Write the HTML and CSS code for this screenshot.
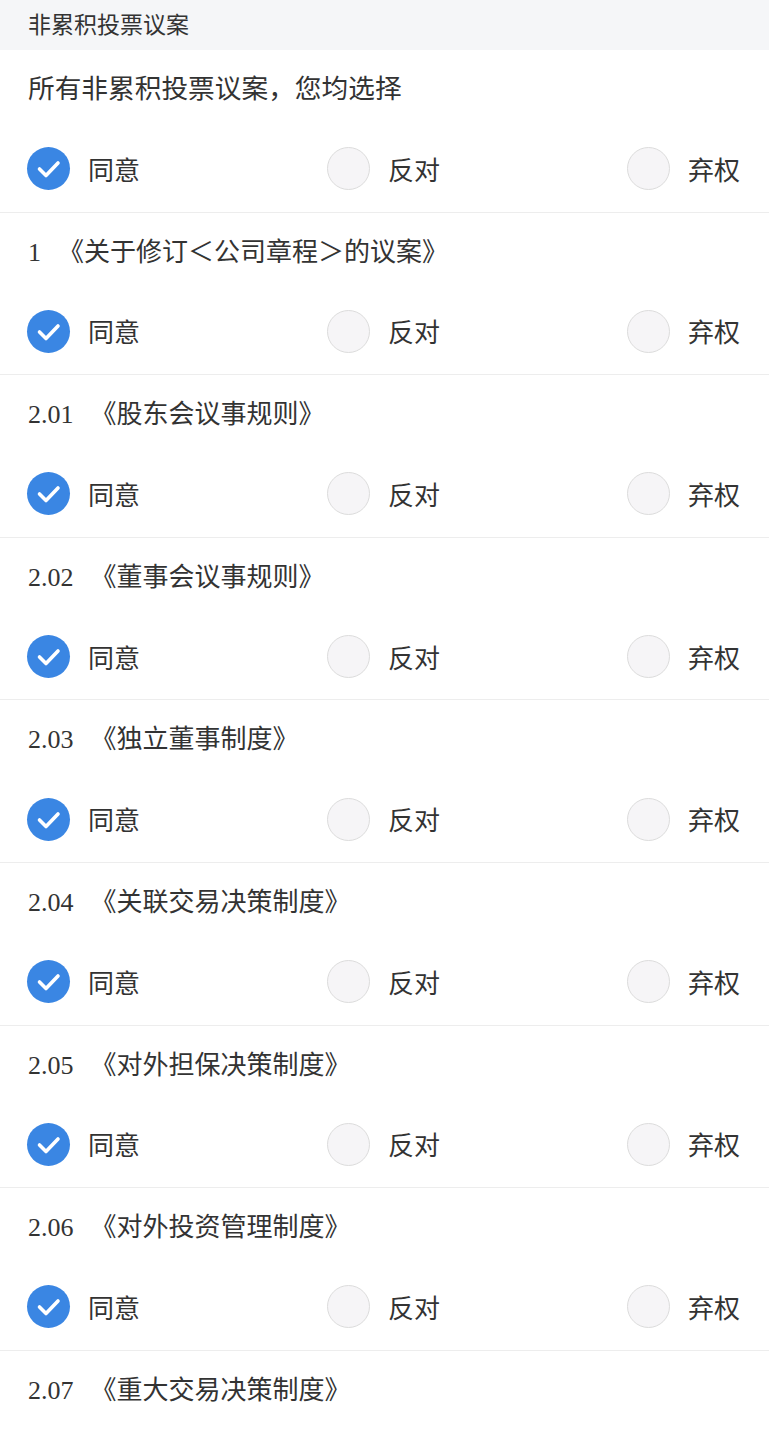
FILE: index.html
```html
<!DOCTYPE html>
<html lang="zh-CN">
<head>
<meta charset="utf-8">
<title>非累积投票议案</title>
<link rel="stylesheet" href="styles.css">
</head>
<body>
<div class="header">非累积投票议案</div>

<div class="section">
  <div class="title all">所有非累积投票议案，您均选择</div>
  <div class="options">
    <div class="opt"><span class="check"><svg viewBox="0 0 43 43" width="43" height="43"><path d="M12.5 22 L19 28.5 L31 16" fill="none" stroke="#fff" stroke-width="3.6" stroke-linecap="round" stroke-linejoin="round"/></svg></span><span class="lbl">同意</span></div>
    <div class="opt"><span class="radio"></span><span class="lbl">反对</span></div>
    <div class="opt"><span class="radio"></span><span class="lbl">弃权</span></div>
  </div>
</div>

<div class="section">
  <div class="title"><span class="num">1</span>《关于修订＜公司章程＞的议案》</div>
  <div class="options">
    <div class="opt"><span class="check"><svg viewBox="0 0 43 43" width="43" height="43"><path d="M12.5 22 L19 28.5 L31 16" fill="none" stroke="#fff" stroke-width="3.6" stroke-linecap="round" stroke-linejoin="round"/></svg></span><span class="lbl">同意</span></div>
    <div class="opt"><span class="radio"></span><span class="lbl">反对</span></div>
    <div class="opt"><span class="radio"></span><span class="lbl">弃权</span></div>
  </div>
</div>

<div class="section">
  <div class="title"><span class="num">2.01</span>《股东会议事规则》</div>
  <div class="options">
    <div class="opt"><span class="check"><svg viewBox="0 0 43 43" width="43" height="43"><path d="M12.5 22 L19 28.5 L31 16" fill="none" stroke="#fff" stroke-width="3.6" stroke-linecap="round" stroke-linejoin="round"/></svg></span><span class="lbl">同意</span></div>
    <div class="opt"><span class="radio"></span><span class="lbl">反对</span></div>
    <div class="opt"><span class="radio"></span><span class="lbl">弃权</span></div>
  </div>
</div>

<div class="section">
  <div class="title"><span class="num">2.02</span>《董事会议事规则》</div>
  <div class="options">
    <div class="opt"><span class="check"><svg viewBox="0 0 43 43" width="43" height="43"><path d="M12.5 22 L19 28.5 L31 16" fill="none" stroke="#fff" stroke-width="3.6" stroke-linecap="round" stroke-linejoin="round"/></svg></span><span class="lbl">同意</span></div>
    <div class="opt"><span class="radio"></span><span class="lbl">反对</span></div>
    <div class="opt"><span class="radio"></span><span class="lbl">弃权</span></div>
  </div>
</div>

<div class="section">
  <div class="title"><span class="num">2.03</span>《独立董事制度》</div>
  <div class="options">
    <div class="opt"><span class="check"><svg viewBox="0 0 43 43" width="43" height="43"><path d="M12.5 22 L19 28.5 L31 16" fill="none" stroke="#fff" stroke-width="3.6" stroke-linecap="round" stroke-linejoin="round"/></svg></span><span class="lbl">同意</span></div>
    <div class="opt"><span class="radio"></span><span class="lbl">反对</span></div>
    <div class="opt"><span class="radio"></span><span class="lbl">弃权</span></div>
  </div>
</div>

<div class="section">
  <div class="title"><span class="num">2.04</span>《关联交易决策制度》</div>
  <div class="options">
    <div class="opt"><span class="check"><svg viewBox="0 0 43 43" width="43" height="43"><path d="M12.5 22 L19 28.5 L31 16" fill="none" stroke="#fff" stroke-width="3.6" stroke-linecap="round" stroke-linejoin="round"/></svg></span><span class="lbl">同意</span></div>
    <div class="opt"><span class="radio"></span><span class="lbl">反对</span></div>
    <div class="opt"><span class="radio"></span><span class="lbl">弃权</span></div>
  </div>
</div>

<div class="section">
  <div class="title"><span class="num">2.05</span>《对外担保决策制度》</div>
  <div class="options">
    <div class="opt"><span class="check"><svg viewBox="0 0 43 43" width="43" height="43"><path d="M12.5 22 L19 28.5 L31 16" fill="none" stroke="#fff" stroke-width="3.6" stroke-linecap="round" stroke-linejoin="round"/></svg></span><span class="lbl">同意</span></div>
    <div class="opt"><span class="radio"></span><span class="lbl">反对</span></div>
    <div class="opt"><span class="radio"></span><span class="lbl">弃权</span></div>
  </div>
</div>

<div class="section">
  <div class="title"><span class="num">2.06</span>《对外投资管理制度》</div>
  <div class="options">
    <div class="opt"><span class="check"><svg viewBox="0 0 43 43" width="43" height="43"><path d="M12.5 22 L19 28.5 L31 16" fill="none" stroke="#fff" stroke-width="3.6" stroke-linecap="round" stroke-linejoin="round"/></svg></span><span class="lbl">同意</span></div>
    <div class="opt"><span class="radio"></span><span class="lbl">反对</span></div>
    <div class="opt"><span class="radio"></span><span class="lbl">弃权</span></div>
  </div>
</div>

<div class="section last">
  <div class="title"><span class="num">2.07</span>《重大交易决策制度》</div>
</div>
</body>
</html>
```

FILE: styles.css
```css
html, body {
  margin: 0;
  padding: 0;
  background: #ffffff;
}
body {
  font-family: "Noto Sans CJK SC", "Noto Sans", sans-serif;
  color: #333333;
}
.header {
  height: 50px;
  line-height: 46px;
  padding-left: 28px;
  background: #f5f6f8;
  font-size: 23px;
  color: #333333;
}
.section {
  border-bottom: 1px solid #ededed;
}
.section.last {
  border-bottom: none;
  padding-bottom: 60px;
}
.title {
  height: 76px;
  line-height: 73px;
  padding-left: 28px;
  font-family: "Noto Sans CJK SC", sans-serif;
  font-size: 26px;
  color: #333333;
  white-space: nowrap;
  overflow: hidden;
}
.title.all {
  font-size: 26.7px;
}
.num {
  font-family: "Liberation Serif", serif;
  font-size: 26px;
  margin-right: 17px;
}
.options {
  height: 85.6px;
  display: grid;
  grid-template-columns: 300px 300px 1fr;
  align-items: center;
  padding-left: 27px;
}
.opt {
  display: flex;
  align-items: center;
  gap: 18px;
}
.check {
  width: 43px;
  height: 43px;
  border-radius: 50%;
  background: #3a86e3;
  display: flex;
}
.radio {
  box-sizing: border-box;
  width: 43px;
  height: 43px;
  border-radius: 50%;
  background: #f6f5f7;
  border: 1.5px solid #dcdcdc;
}
.lbl {
  font-size: 26px;
  color: #333333;
  line-height: 1;
}
```
